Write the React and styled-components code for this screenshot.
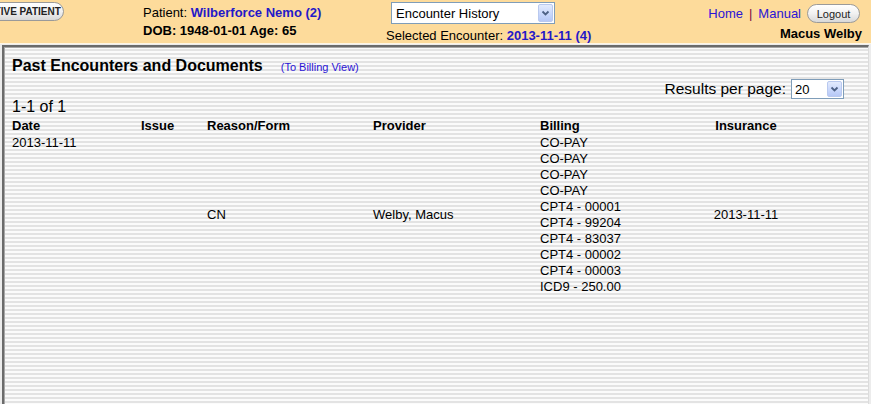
import React from 'react';
import styled, { createGlobalStyle } from 'styled-components';

const GlobalStyle = createGlobalStyle`
  html, body {
    margin: 0;
    padding: 0;
    background: #ececec;
    overflow: hidden;
  }
  body {
    font-family: "Liberation Sans", Arial, sans-serif;
    font-size: 13px;
    color: #000;
  }
`;

const Page = styled.div`
  width: 871px;
  height: 404px;
  display: flex;
  flex-direction: column;
  overflow: hidden;
`;

const TopBar = styled.div`
  height: 43px;
  background: #fddb9b;
  display: flex;
  align-items: flex-start;
  border-bottom: 1px solid #fff6e4;
  flex-shrink: 0;
`;

const PillButton = styled.div`
  display: inline-flex;
  align-items: center;
  justify-content: center;
  height: 17px;
  padding: 0 8px;
  border: 1px solid #9a9a9a;
  border-radius: 10px;
  background: linear-gradient(#ffffff 0%, #f1f1f1 50%, #d8d8d8 100%);
  color: #222;
  font-size: ${(p) => (p.bold ? '10px' : '11px')};
  font-weight: ${(p) => (p.bold ? 'bold' : 'normal')};
  white-space: nowrap;
  box-sizing: border-box;
`;

const LeftSlot = styled.div`
  width: 143px;
  flex-shrink: 0;
  padding-top: 2px;
  overflow: hidden;
  ${PillButton} {
    margin-left: -23px;
    width: 87px;
    height: 19px;
  }
`;

const PatientBox = styled.div`
  width: 243px;
  flex-shrink: 0;
  padding-top: 4px;
  line-height: 18px;
`;

const Line = styled.div`
  white-space: nowrap;
  font-weight: ${(p) => (p.bold ? 'bold' : 'normal')};
`;

const Strong = styled.b`
  color: ${(p) => p.color || '#000'};
`;

const EncounterBox = styled.div`
  flex-shrink: 0;
  width: 180px;
  padding-top: 2px;
  display: flex;
  flex-direction: column;
`;

const FakeSelect = styled.div`
  width: ${(p) => p.width}px;
  height: ${(p) => p.height}px;
  box-sizing: border-box;
  border: 1px solid #7f9db9;
  background: #fff;
  display: flex;
  align-items: center;
  margin-left: ${(p) => p.offset || 0}px;
  font-size: ${(p) => p.fontSize || 13}px;
`;

const SelectText = styled.span`
  flex: 1;
  padding-left: ${(p) => p.pad || 4}px;
  white-space: nowrap;
  color: #000;
`;

const ArrowBtn = styled.span`
  width: 15px;
  height: calc(100% - 2px);
  margin-right: 1px;
  box-sizing: border-box;
  border: 1px solid #b9c9ef;
  border-radius: 2px;
  background: linear-gradient(#e3ebfd 0%, #c7d6fb 60%, #b6c8f6 100%);
  display: flex;
  align-items: center;
  justify-content: center;
`;

const SelectedLine = styled.div`
  margin-top: 3px;
  white-space: nowrap;
  line-height: 18px;
`;

const RightBox = styled.div`
  flex: 1;
  display: flex;
  flex-direction: column;
  align-items: flex-end;
  padding-right: 9px;
  padding-top: 4px;
`;

const NavRow = styled.div`
  display: flex;
  align-items: center;
  gap: 6px;
  white-space: nowrap;
  margin-right: 2px;
  ${PillButton} {
    width: 53px;
    height: 19px;
  }
`;

const NavLink = styled.span`
  color: #2a14d6;
  font-size: 13px;
`;

const Sep = styled.span`
  color: #7a0b45;
  font-size: 13px;
`;

const UserName = styled.div`
  font-weight: bold;
  margin-top: 2px;
  line-height: 18px;
`;

const Frame = styled.div`
  flex: 1;
  margin: 1px 2px 0 2px;
  border-top: 2px solid #6b6b6b;
  border-left: 2px solid #6b6b6b;
  border-right: 1px solid #dcdcdc;
  box-shadow: inset 1px 1px 0 #a7a7a7;
  background: repeating-linear-gradient(
    to bottom,
    #fbfbfb 0px,
    #fbfbfb 2px,
    #e3e3e3 2px,
    #e3e3e3 4px
  );
  padding: 5px 0 0 8px;
`;

const TitleRow = styled.div`
  display: flex;
  align-items: baseline;
  height: 27px;
  padding-top: 5px;
  box-sizing: border-box;
`;

const Title = styled.span`
  font-size: 16px;
  font-weight: bold;
`;

const SmallLink = styled.span`
  font-size: 11px;
  color: #2a14d6;
  margin-left: 18px;
`;

const PagerRow = styled.div`
  display: flex;
  justify-content: flex-end;
  align-items: center;
  gap: 5px;
  padding-right: 24px;
  height: 20px;
  font-size: 15.5px;
`;

const Count = styled.div`
  font-size: 16px;
  line-height: 18px;
  margin-top: -1px;
`;

const Table = styled.div`
  display: grid;
  grid-template-columns: 129px 66px 166px 167px 172px 68px;
  line-height: 16px;
  font-size: 13px;
`;

const Th = styled.div`
  font-weight: bold;
  padding: 2px 0 1px;
  text-align: ${(p) => (p.center ? 'center' : 'left')};
  white-space: nowrap;
`;

const Td = styled.div`
  align-self: ${(p) => (p.top ? 'start' : 'center')};
  text-align: ${(p) => (p.center ? 'center' : 'left')};
  white-space: nowrap;
`;

const Chevron = () => (
  <svg width="9" height="7" viewBox="0 0 9 7">
    <path d="M1.5 1.5 L4.5 4.5 L7.5 1.5" fill="none" stroke="#4d6185" strokeWidth="1.8" />
  </svg>
);

const billing = [
  'CO-PAY',
  'CO-PAY',
  'CO-PAY',
  'CO-PAY',
  'CPT4 - 00001',
  'CPT4 - 99204',
  'CPT4 - 83037',
  'CPT4 - 00002',
  'CPT4 - 00003',
  'ICD9 - 250.00',
];

export default function App() {
  return (
    <Page>
      <GlobalStyle />
      <TopBar>
        <LeftSlot>
          <PillButton bold>ACTIVE PATIENT</PillButton>
        </LeftSlot>
        <PatientBox>
          <Line>
            Patient: <Strong color="#2418c8">Wilberforce Nemo (2)</Strong>
          </Line>
          <Line bold>DOB: 1948-01-01 Age: 65</Line>
        </PatientBox>
        <EncounterBox>
          <FakeSelect width={164} height={22} offset={5}>
            <SelectText>Encounter History</SelectText>
            <ArrowBtn>
              <Chevron />
            </ArrowBtn>
          </FakeSelect>
          <SelectedLine>
            Selected Encounter: <Strong color="#2418c8">2013-11-11 (4)</Strong>
          </SelectedLine>
        </EncounterBox>
        <RightBox>
          <NavRow>
            <NavLink>Home</NavLink>
            <Sep>|</Sep>
            <NavLink>Manual</NavLink>
            <PillButton>Logout</PillButton>
          </NavRow>
          <UserName>Macus Welby</UserName>
        </RightBox>
      </TopBar>
      <Frame>
        <TitleRow>
          <Title>Past Encounters and Documents</Title>
          <SmallLink>(To Billing View)</SmallLink>
        </TitleRow>
        <PagerRow>
          <span>Results per page:</span>
          <FakeSelect width={53} height={20} fontSize={13}>
            <SelectText pad={3}>20</SelectText>
            <ArrowBtn>
              <Chevron />
            </ArrowBtn>
          </FakeSelect>
        </PagerRow>
        <Count>1-1 of 1</Count>
        <Table>
          <Th>Date</Th>
          <Th>Issue</Th>
          <Th>Reason/Form</Th>
          <Th>Provider</Th>
          <Th>Billing</Th>
          <Th center>Insurance</Th>
          <Td top>2013-11-11</Td>
          <Td></Td>
          <Td>CN</Td>
          <Td>Welby, Macus</Td>
          <Td top>
            {billing.map((b, i) => (
              <div key={i}>{b}</div>
            ))}
          </Td>
          <Td center>2013-11-11</Td>
        </Table>
      </Frame>
    </Page>
  );
}
